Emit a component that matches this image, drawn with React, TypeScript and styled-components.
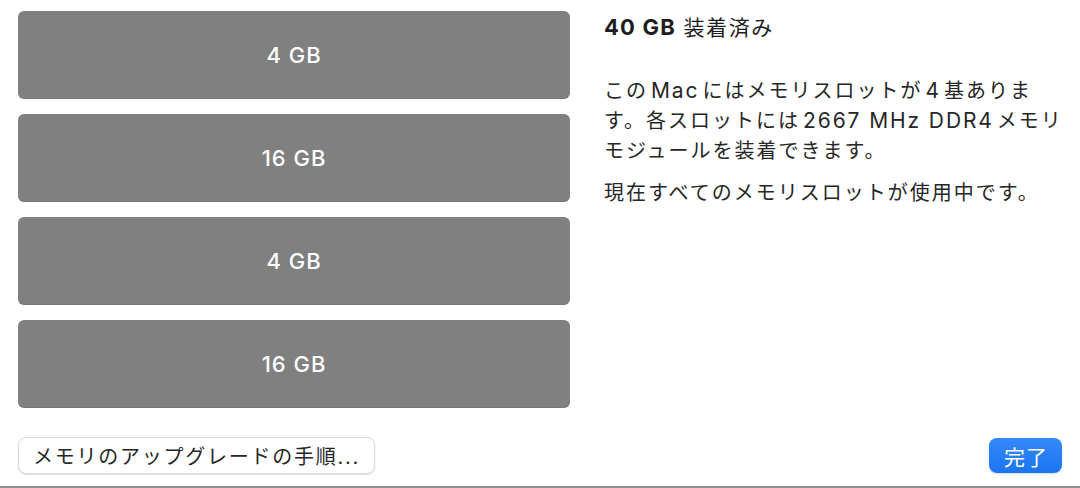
import React from "react";
import styled, { createGlobalStyle } from "styled-components";

const GlobalStyle = createGlobalStyle`
  html, body {
    margin: 0;
    padding: 0;
    background: #ffffff;
  }
  body {
    font-family: "Inter", "Noto Sans CJK JP", sans-serif;
    color: #1d1d1f;
    -webkit-font-smoothing: antialiased;
  }
`;

const Window = styled.div`
  width: 1080px;
  height: 488px;
  box-sizing: border-box;
  display: flex;
  flex-direction: column;
  border-bottom: 2px solid #8e8e8e;
  overflow: hidden;
`;

const Content = styled.div`
  display: flex;
  gap: 34px;
  padding: 11px 18px 0 18px;
`;

const SlotList = styled.div`
  width: 552px;
  display: flex;
  flex-direction: column;
  gap: 15px;
`;

const Slot = styled.div`
  height: 88px;
  border-radius: 6px;
  background: #808080;
  box-shadow: inset 0 -1px 0 rgba(0, 0, 0, 0.08);
  display: flex;
  align-items: center;
  justify-content: center;
  color: #ffffff;
  font-size: 22px;
  font-weight: 500;
  letter-spacing: 1px;
`;

const Info = styled.div`
  width: 458px;
  padding-top: 1px;
  display: flex;
  flex-direction: column;
`;

const Title = styled.div`
  font-size: 21px;
  line-height: 30px;
  letter-spacing: 1.6px;
  color: #1d1d1f;
  white-space: nowrap;
`;

const Strong = styled.span`
  font-size: 22px;
  font-weight: 700;
  letter-spacing: 1.2px;
`;

/* Latin runs inside Japanese copy: larger face, tighter tracking */
const Latin = styled.span`
  font-size: 21px;
  letter-spacing: 1.9px;
  margin: 0 3px;
`;

const Paragraph = styled.p<{ $gap: number }>`
  margin: ${(p) => p.$gap}px 0 0 0;
  font-size: 20px;
  line-height: 30px;
  letter-spacing: 2px;
  color: #262626;
  white-space: nowrap;
`;

const Footer = styled.div`
  margin-top: auto;
  height: 49px;
  padding: 0 18px;
  display: flex;
  align-items: flex-start;
  justify-content: space-between;
`;

const SecondaryButton = styled.button`
  width: 357px;
  height: 37px;
  box-sizing: border-box;
  border: 1px solid #dadada;
  border-radius: 8px;
  background: #ffffff;
  box-shadow: 0 1px 1.5px rgba(0, 0, 0, 0.12);
  font-family: "Inter", "Noto Sans CJK JP", sans-serif;
  font-size: 20px;
  letter-spacing: 1.75px;
  color: #262626;
  padding: 0;
  display: flex;
  align-items: center;
  justify-content: center;
  white-space: nowrap;
`;

const PrimaryButton = styled.button`
  width: 73px;
  height: 35px;
  margin-top: 1px;
  border: none;
  border-radius: 8px;
  background: linear-gradient(#3489f8, #1c75f1);
  box-shadow: 0 1px 1.5px rgba(0, 0, 0, 0.15);
  font-family: "Inter", "Noto Sans CJK JP", sans-serif;
  font-size: 21px;
  letter-spacing: 1px;
  color: #ffffff;
  padding: 0 0 0 1px;
  display: flex;
  align-items: center;
  justify-content: center;
`;

const slots = ["4 GB", "16 GB", "4 GB", "16 GB"];

export default function App() {
  return (
    <>
      <GlobalStyle />
      <Window>
        <Content>
          <SlotList>
            {slots.map((size, i) => (
              <Slot key={i}>{size}</Slot>
            ))}
          </SlotList>
          <Info>
            <Title>
              <Strong>40 GB</Strong> 装着済み
            </Title>
            <Paragraph $gap={33}>
              この<Latin>Mac</Latin>にはメモリスロットが<Latin>4</Latin>基ありま
              <br />
              す。各スロットには<Latin>2667 MHz DDR4</Latin>メモリ
              <br />
              モジュールを装着できます。
            </Paragraph>
            <Paragraph $gap={12}>現在すべてのメモリスロットが使用中です。</Paragraph>
          </Info>
        </Content>
        <Footer>
          <SecondaryButton>メモリのアップグレードの手順...</SecondaryButton>
          <PrimaryButton>完了</PrimaryButton>
        </Footer>
      </Window>
    </>
  );
}
